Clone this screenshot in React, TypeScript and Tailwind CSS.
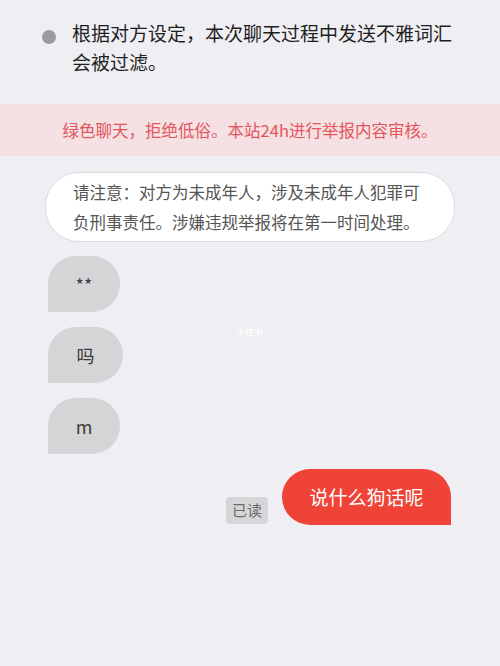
import React from "react";

const font = {
  fontFamily: '"Noto Sans CJK SC", "Noto Sans", sans-serif',
};

function LeftBubble({ text, w }: { text: string; w: string }) {
  return (
    <div
      className={`flex h-[56px] ${w} items-center justify-center rounded-tl-[28px] rounded-tr-[28px] rounded-br-[28px] rounded-bl-none bg-[#d5d4d7] text-[18px] text-[#3a3a3a]`}
    >
      {text}
    </div>
  );
}

export default function App() {
  return (
    <div
      className="relative flex min-h-[666px] w-[500px] flex-col bg-[#efeef3]"
      style={font}
    >
      {/* system notice */}
      <div className="flex gap-[16px] pl-[42px] pr-[40px] pt-[18px]">
        <div className="mt-[12px] h-[14px] w-[14px] shrink-0 rounded-full bg-[#9b9a9f]"></div>
        <p className="text-[19px] leading-[29px] text-[#1f1f1f]">
          根据对方设定，本次聊天过程中发送不雅词汇会被过滤。
        </p>
      </div>

      {/* pink banner */}
      <div className="mt-[28px] flex h-[52px] items-center justify-center bg-[#f5e0e3]">
        <span className="text-[16.5px] text-[#e2565c]">
          绿色聊天，拒绝低俗。本站24h进行举报内容审核。
        </span>
      </div>

      {/* minor warning */}
      <div className="mx-[45px] mt-[16px] rounded-[34px] border border-[#dcdcde] bg-white py-[4px] pl-[27px] pr-[24px]">
        <p className="text-[16.5px] leading-[30px] text-[#555555]">
          请注意：对方为未成年人，涉及未成年人犯罪可负刑事责任。涉嫌违规举报将在第一时间处理。
        </p>
      </div>

      {/* messages */}
      <div className="mt-[14px] flex flex-col gap-[15px] pl-[48px]">
        <LeftBubble text="**" w="w-[72px]" />
        <LeftBubble text="吗" w="w-[75px]" />
        <LeftBubble text="m" w="w-[72px]" />
      </div>

      <div className="mt-[15px] flex items-end justify-end gap-[14px] pr-[49px]">
        <div className="mb-[1px] flex h-[27px] w-[42px] items-center justify-center rounded-[4px] bg-[#d6d5d8] text-[15px] text-[#6a6a6a]">
          已读
        </div>
        <div className="flex h-[56px] w-[169px] items-center justify-center rounded-tl-[28px] rounded-tr-[28px] rounded-bl-[28px] rounded-br-none bg-[#f04337] text-[19px] text-white">
          说什么狗话呢
        </div>
      </div>

      {/* watermark */}
      <span className="absolute left-[236px] top-[326px] text-[9px] font-bold text-white opacity-90">
        小红书
      </span>
    </div>
  );
}
